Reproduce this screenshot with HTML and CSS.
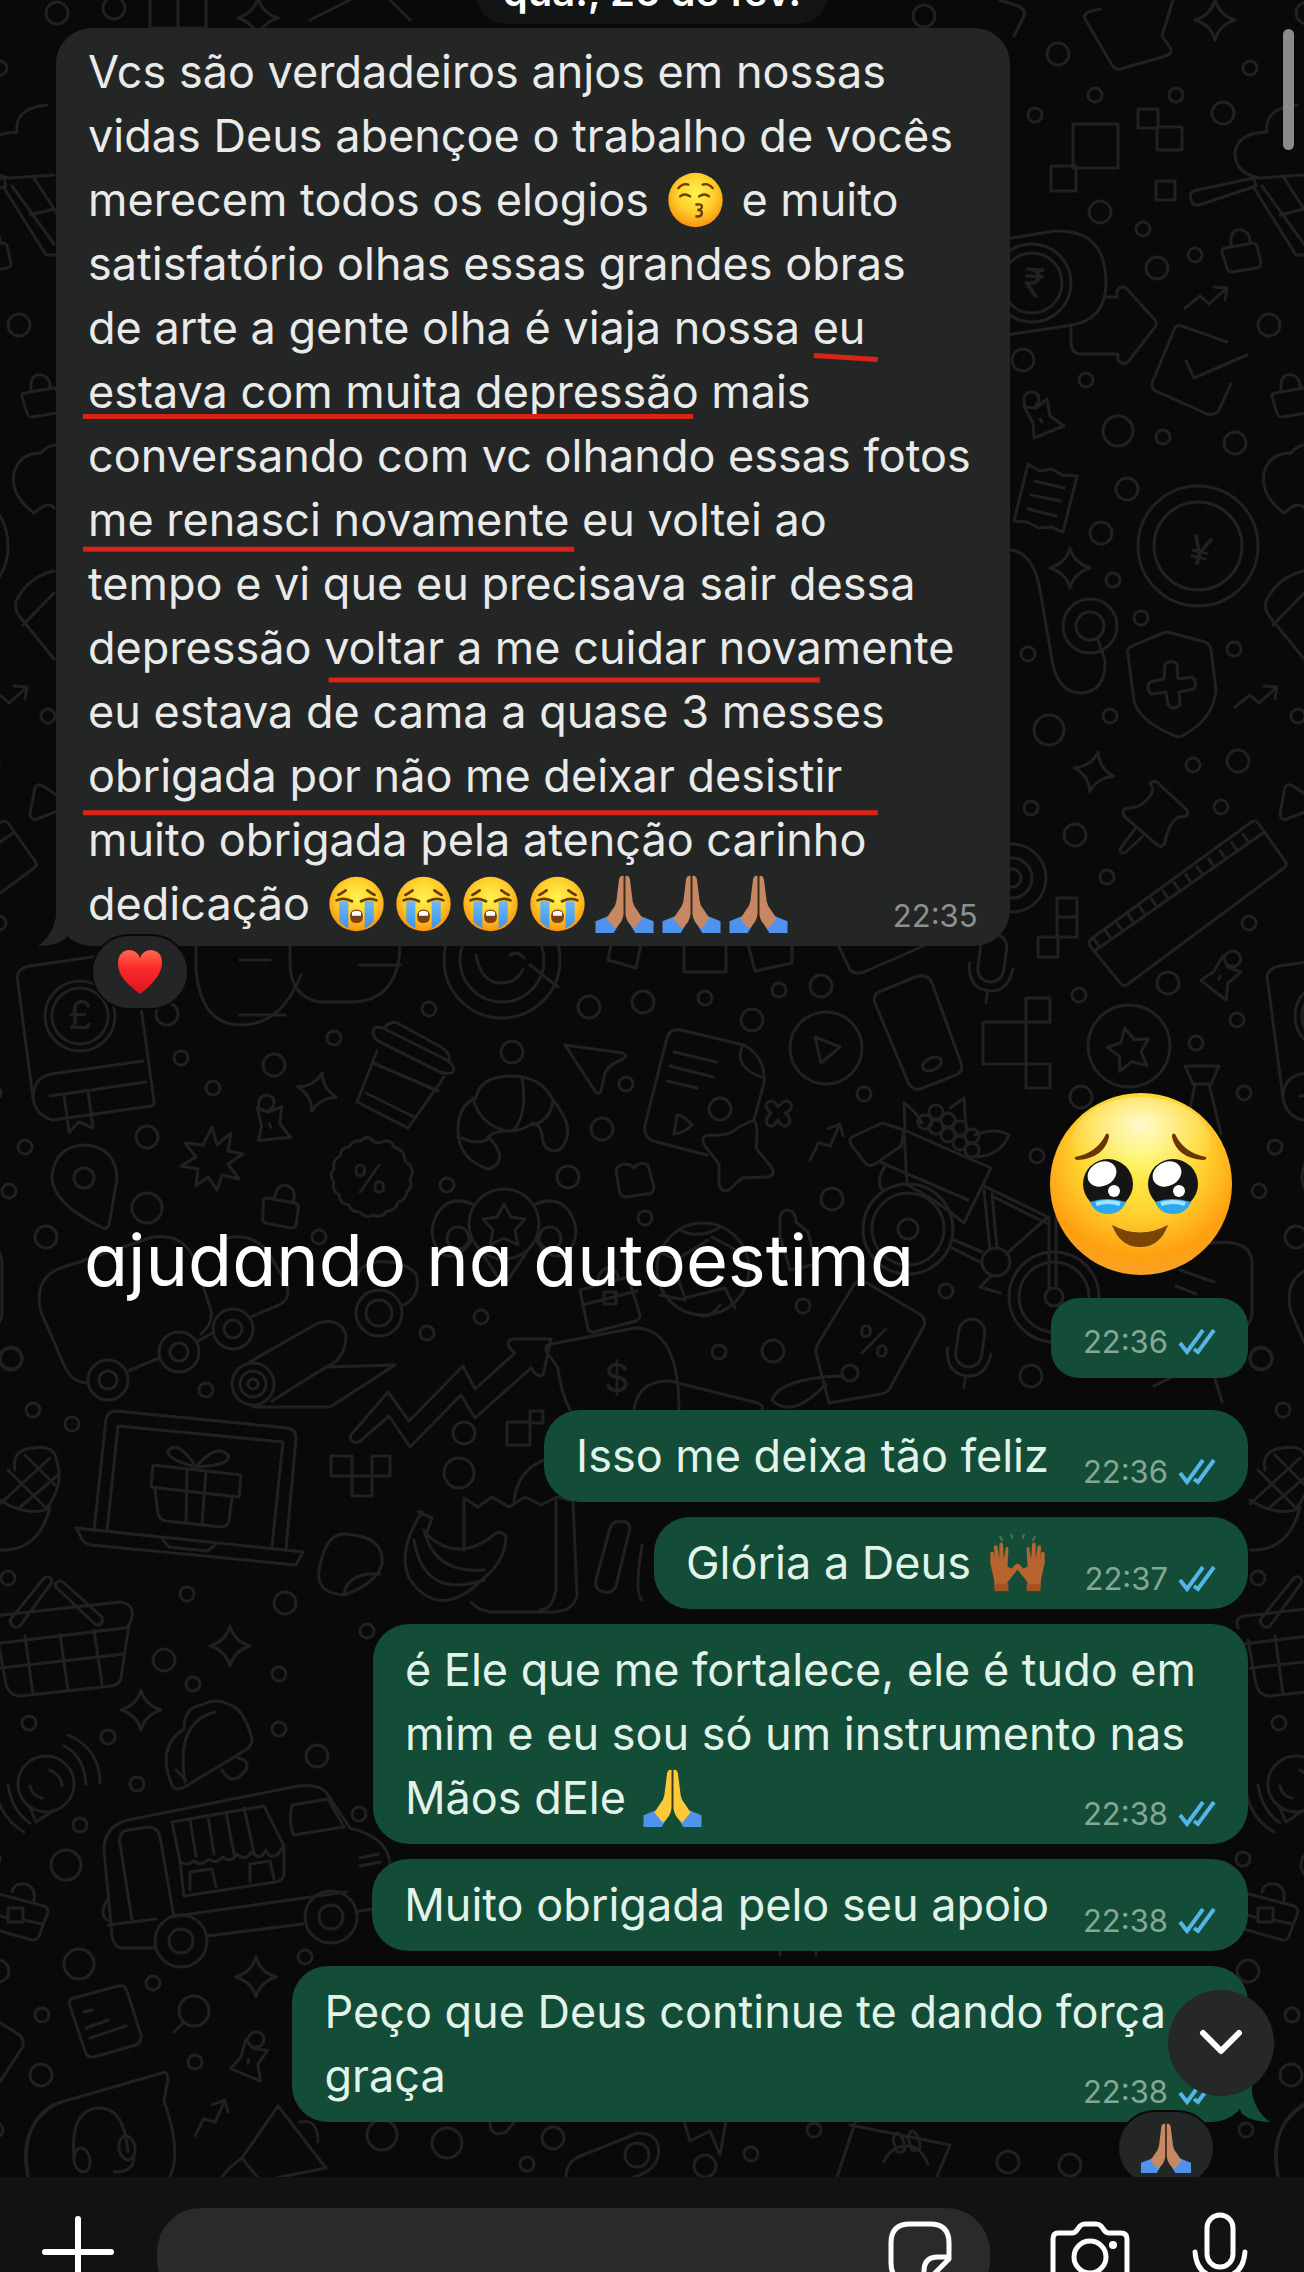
FILE: index.html
```html
<!DOCTYPE html>
<html lang="pt-BR">
<head>
  <meta charset="utf-8">
  <meta name="viewport" content="width=device-width, initial-scale=1">
  <title>Conversa</title>

  <link rel="stylesheet" href="styles.css">

</head>
<body>

  <!-- shared emoji and icons -->
  <svg class="sprite" aria-hidden="true">
    <defs>
      <radialGradient id="face" cx="50%" cy="38%" r="62%">
        <stop offset="0" stop-color="#fff24f"/>
        <stop offset="0.55" stop-color="#ffd02c"/>
        <stop offset="1" stop-color="#f79410"/>
      </radialGradient>
      <radialGradient id="face-big" cx="50%" cy="32%" r="68%">
        <stop offset="0" stop-color="#fff95c"/>
        <stop offset="0.5" stop-color="#ffd330"/>
        <stop offset="0.85" stop-color="#ff9f0f"/>
        <stop offset="1" stop-color="#f8a22a"/>
      </radialGradient>
      <radialGradient id="shine" cx="50%" cy="30%" r="60%">
        <stop offset="0" stop-color="#fffbe0" stop-opacity="0.9"/>
        <stop offset="1" stop-color="#fff7a0" stop-opacity="0"/>
      </radialGradient>
      <linearGradient id="heart-fill" x1="0" y1="0" x2="0" y2="1">
        <stop offset="0" stop-color="#ff6a4d"/>
        <stop offset="0.4" stop-color="#fb2c2c"/>
        <stop offset="1" stop-color="#e0121d"/>
      </linearGradient>
      <linearGradient id="tears" x1="0" y1="0" x2="0" y2="1">
        <stop offset="0" stop-color="#6cb8f5"/>
        <stop offset="1" stop-color="#3d94e8"/>
      </linearGradient>
    </defs>

    <symbol id="kiss" viewBox="0 0 64 64">
      <circle cx="32" cy="32" r="30" fill="url(#face)"/>
      <g fill="none" stroke="#6b3a05" stroke-width="2.6" stroke-linecap="round">
        <path d="M13 19q5-6 11-4M40 15q6-2 11 4"/>
        <path d="M15 28q5-4 11 0M36 28q6-4 11 0"/>
        <path d="M33 37q7-1 6 3-1 3-5 3 6 0 5 4-1 4-6 3"/>
      </g>
    </symbol>

    <symbol id="sob" viewBox="0 0 64 64">
      <circle cx="32" cy="32" r="30" fill="url(#face)"/>
      <path d="M13 29h10v30q-6-3-10-8zM41 29h10v22q-4 5-10 8z" fill="url(#tears)"/>
      <g fill="none" stroke="#6b3a05" stroke-width="3" stroke-linecap="round">
        <path d="M12 22q4-2 8-5M52 22q-4-2-8-5"/>
        <path d="M10 28q8-4 17 1M54 28q-8-4-17 1"/>
      </g>
      <path d="M32 38q7 0 7 8 0 7-7 7t-7-7q0-8 7-8z" fill="#7c3f10"/>
      <path d="M27 41q5-3 10 0v4H27z" fill="#fff"/>
    </symbol>

    <symbol id="hold-tears" viewBox="0 0 182 182">
      <circle cx="91" cy="91" r="91" fill="url(#face-big)"/>
      <ellipse cx="91" cy="50" rx="70" ry="46" fill="url(#shine)"/>
      <path d="M25 64q22-4 31-23 3-2 3 3-5 21-31 23-4 0-3-3zM156 64q-22-4-31-23-3-2-3 3 5 21 31 23 4 0 3-3z" fill="#6a3504"/>
      <circle cx="58" cy="91" r="25" fill="#151515"/>
      <circle cx="123" cy="91" r="25" fill="#151515"/>
      <g fill="#fff">
        <ellipse cx="52" cy="81" rx="15" ry="12" transform="rotate(-28 52 81)"/>
        <ellipse cx="117" cy="81" rx="15" ry="12" transform="rotate(-28 117 81)"/>
        <circle cx="64" cy="98" r="6"/>
        <circle cx="129" cy="98" r="6"/>
      </g>
      <path d="M40 109q17-6 36 0-5 12-18 12t-18-12zM105 109q17-6 36 0-5 12-18 12t-18-12z" fill="#2ba8ee"/>
      <path d="M46 111q12-4 24 0M111 111q12-4 24 0" fill="none" stroke="#a5e2ff" stroke-width="4"/>
      <path d="M62 132q28 15 56 0-8 22-28 22t-28-22z" fill="#7a4505"/>
    </symbol>

    <symbol id="pray" viewBox="0 0 64 64">
      <path d="M0 51l15-6 10 11-5 8H0zM64 51l-15-6-10 11 5 8h20z" fill="#4f93ee"/>
      <path d="M31 1q-4-1-5 4l-3 24q-1 6-5 10l-6 9 9 11q9-6 10-16z" fill="currentColor"/>
      <path d="M33 1q4-1 5 4l3 24q1 6 5 10l6 9-9 11q-9-6-10-16z" fill="currentColor"/>
      <path d="M32 3v42" stroke="#553019" stroke-opacity="0.6" stroke-width="1.6"/>
    </symbol>

    <symbol id="raise" viewBox="0 0 64 64">
      <path d="M15 7l-2-4M26 4l-1-4M38 4l1-4M49 7l2-4" stroke="#63897a" stroke-opacity="0.6" stroke-width="2.4" stroke-linecap="round"/>
      <g id="palm" fill="#b8642f">
        <path d="M6 50L2 32V21q2-3 4 0l1 8-1-15q2-3 4 0l2 14V11q2-3 4 0l1 17 2-13q3-2 3 1l-1 20 5 2q4-6 7-5 1 4-3 9l-9 11v10H7z"/>
        <path d="M7 55h15v8H7z" fill="#a65324"/>
      </g>
      <use href="#palm" transform="matrix(-1 0 0 1 64 0)"/>
    </symbol>

    <symbol id="heart" viewBox="0 0 46 46">
      <path d="M23 45C12 36 1 28 1 14 1 6 6 1 12 1q8 0 11 8Q26 1 34 1q11 1 11 13 0 14-22 31z" fill="url(#heart-fill)"/>
    </symbol>

    <symbol id="ticks" viewBox="0 0 38 26">
      <path d="M2 14l7 9L25 1M16 20l4 3L36 1" fill="none" stroke="#53b5e8" stroke-width="4"/>
    </symbol>
  </svg>

  <main class="chat">

    <!-- wallpaper, repeats every 1250 units sideways -->
    <svg class="wallpaper" viewBox="0 0 1304 2272" aria-hidden="true">
      <defs>
        <marker id="dot" markerUnits="userSpaceOnUse" markerWidth="20" markerHeight="20" refX="10" refY="10" orient="0">
          <circle cx="10" cy="10" r="7"/>
        </marker>
        <marker id="ring" markerUnits="userSpaceOnUse" markerWidth="28" markerHeight="28" refX="14" refY="14" orient="0">
          <circle cx="14" cy="14" r="11"/>
        </marker>
        <marker id="ring-lg" markerUnits="userSpaceOnUse" markerWidth="36" markerHeight="36" refX="18" refY="18" orient="0">
          <circle cx="18" cy="18" r="15"/>
        </marker>
        <path id="spark" d="M0-20Q4-5 20 0 4 5 0 20-4 5-20 0-4-5 0-20z"/>
        <path id="lock" d="M-15-5l28-5q3 0 4 3l4 17q0 4-4 5l-25 4q-4 0-5-4l-5-16q-1-3 3-4zM-9-7v-8q2-10 11-8 8 2 8 12"/>
        <path id="clip" d="M-16-10l12 1 11-9 3 17 14 10-30 12-1-15zM-15-11q-4-12 5-14 9-1 9 9l-4 6M0 2l2 3"/>
        <path id="zig" d="M-21 10L-6-2 3 6 21-10M8-11l13 1-2 12"/>
        <g id="mic">
          <rect x="-13" y="-26" width="26" height="48" rx="13"/>
          <path d="M-22 6q2 25 22 25T22 6M0 31v12"/>
        </g>
        <path id="star" d="M0-20l7 13 14 2-10 11 3 15-14-7-14 7 3-15-10-11 14-2z"/>

        <g id="doodles">
          <polyline class="dots" marker-start="url(#dot)" marker-mid="url(#dot)" marker-end="url(#dot)" points="1035,115 1095,95 1176,95 1250,68 1143,229 1195,255 1086,380 1163,437 1113,580 1141,618 1028,654 1234,649 1110,716 48,716 1193,765 1221,807 1031,808 1107,877 1249,923 1079,995 1237,1020 1196,1043 705,998 779,990 626,1084 864,1094 645,1218 803,1306 946,1291 719,1352 1037,1156 334,1038 181,1058 213,1088 25,1147 9,1191 447,1185 319,1237 427,1333 481,1317 206,1390 33,1410 72,1424 8,1578 187,1594 367,1631 429,1009 193,1684 279,1674 29,1723 108,1737 279,1729 137,1784 80,1825 359,1814 305,1957 153,1983 42,2015 195,2062 527,2164 1243,1859 1246,2130 814,2130 1244,1093 751,2154"/>
          <polyline class="dots" marker-start="url(#ring)" marker-mid="url(#ring)" marker-end="url(#ring)" points="57,13 114,8 924,16 1058,54 1223,113 1100,212 1157,268 1269,325 1023,360 1235,443 1127,489 1101,533 1238,761 1075,835 1168,983 589,1007 643,1002 752,1020 821,986 512,1052 602,1129 568,1177 720,1109 832,1199 773,1351 1031,1376 167,1014 274,1065 147,1137 46,1237 11,1358 464,1433 285,1603 164,1660 317,1756 41,2075 553,2138 1248,1971 1008,2162 705,2166 1070,2165 1081,1097 1261,1359"/>
          <polyline class="dots" marker-start="url(#ring-lg)" marker-mid="url(#ring-lg)" marker-end="url(#ring-lg)" points="1118,431 1049,730 147,1208 459,1473 66,1865 79,1964 382,2135 447,2143"/>

          <use href="#spark" x="1215" y="20"/>
          <use href="#spark" x="258" y="18"/>
          <use href="#spark" x="1070" y="568"/>
          <use href="#spark" transform="translate(1094 772) rotate(12)"/>
          <use href="#spark" transform="translate(317 1092) rotate(15)"/>
          <use href="#spark" x="230" y="1646"/>
          <use href="#spark" x="141" y="1710"/>
          <use href="#spark" x="256" y="1977"/>
          <use href="#lock" x="1240" y="253"/>
          <use href="#lock" x="1290" y="398"/>
          <use href="#lock" transform="translate(280 1208) rotate(20)"/>
          <use href="#clip" x="1040" y="417"/>
          <use href="#clip" transform="translate(1222 975) rotate(60)"/>
          <use href="#clip" transform="translate(270 1122) rotate(16)"/>
          <use href="#clip" transform="translate(250 2058) rotate(45)"/>
          <use href="#zig" x="1206" y="298"/>
          <use href="#zig" x="1256" y="697"/>
          <use href="#zig" transform="translate(825 1142) rotate(-25)"/>
          <use href="#zig" transform="translate(210 2118) rotate(-25)"/>
          <use href="#mic" transform="translate(992 960) rotate(8)"/>
          <use href="#mic" transform="translate(970 1345) rotate(8)"/>
          <use href="#star" transform="translate(1129 1048) rotate(-12)"/>
          <use href="#star" x="504" y="1224"/>

          <!-- top corner -->
          <path d="M150 0v28h56V0M178 0v28M1100 9l-12 3q-5 3-3 7l27 46q3 5 8 4l46-13q8-4 3-10l-7-10 11-36M1000 0l18 6q8 3 6 10l-10 20M310 20l40-20M390 0l20 20"/>
          <path d="M1073 124h45v44h-45zM1051 166h25v25h-25zM1138 109h20v19h-20zM1157 127h25v23h-25zM1156 181h19v19h-19z"/>
          <path d="M1304 175l-45 3q-24-5-24-25 2-20 32-21-3-24 30-27M1191 200q-3-8 6-10l57-12 2 8-57 19q-6 1-8-5zM1254 188l42 67h40M1262 186l42 58M1284 178l22 34M1280 215l24-6"/>
          <circle cx="1032" cy="283" r="39"/>
          <circle cx="1032" cy="283" r="30"/>
          <path d="M1000 240l55-9q51-2 51 52 0 39-40 43l-66 10M1106 297h11v-6q4-7 10-2l28 31q3 4 0 7l-27 35q-6 4-10-2v-6h-38q-9-1-9-12v-15"/>
          <path d="M1227 342l-45-16q-6-2-8 4l-22 53q-1 6 4 8l51 23q8 2 12-4l12-26M1186 361l8 17 53-23"/>
          <path d="M1028 464l12 7 12-2 10 6 15 1-14 56-12-5-12 1-12-6-13-1zM1035 481l29 7M1031 495l29 6M1028 509l28 7"/>
          <circle cx="1198" cy="546" r="60"/>
          <circle cx="1198" cy="546" r="44"/>
          <path d="M1304 508q-5-8-20 5-24-18-20-40 5-20 27-20 8-10 22-8"/>
          <path d="M1000 550q32-5 40 40l12 70q5 33 30 33 24-2 23-33l-7-20"/>
          <circle cx="1090" cy="626" r="27"/>
          <circle cx="1090" cy="626" r="14"/>
          <path d="M1304 571q-25 5-38 30-2 9 4 16l34 42M1273 625l31-32"/>
          <path d="M1128 655q-2-6 4-9l31-13q4-2 8 0l34 9q5 2 6 8l5 40q-2 28-32 45-4 3-9 1-36-15-41-35z"/>
          <path d="M1165 664q7-5 12 0l1 15 14-2q6 5 2 12l-15 3 1 13q-7 6-12 0l-2-13-15 2q-6-6-1-12l14-3z"/>
          <path d="M1150 783q6-4 10 2l26 24q6 8-7 8-10 5-14 25-3 8-9 2l-32-28q-3-8 4-8 14 0 22-12 5-6 0-13zM1135 829l-15 20q0 6 6 3l17-16"/>
          <path d="M1250 823q5-4 8 0l27 38q3 4-1 7l-156 116q-4 3-7 0l-31-38q-2-4 1-7zM1096 950l167-117"/>
          <path class="ruler" d="M1095 943l158-111"/>
          <path d="M1285 787q3-4 8-1l24 16q2 4-2 6l-28 11q-6 2-7-5z"/>
          <circle cx="1012" cy="878" r="34"/>
          <circle cx="1012" cy="878" r="20"/>
          <circle cx="1012" cy="878" r="9"/>
          <path d="M1057 898h20v19h-20zM1057 917h20v20h-20zM1038 937h20v20h-20zM1026 998h24v24h-24zM983 1022h43v42h-43zM1026 1064h24v24h-24z"/>
          <circle cx="1129" cy="1046" r="41"/>
          <path d="M1185 1066h34l-8 18h-18zM1195 1084l-8 40M1209 1084l12 50"/>

          <!-- middle band -->
          <circle cx="502" cy="960" r="58"/>
          <circle cx="502" cy="960" r="42"/>
          <path d="M476 955q5 28 25 28 16 0 22-14M510 955q8-5 14 3M530 965l28 22M612 940l-4 20 28 8 6-28M684 940v32h42v-32M747 940l8 31 37-8v-23M836 940l14 30q6 5 14 2l64-28M196 940v30q5 55 45 55t60-50M240 960h30M240 1015h45M290 940v22q0 35 30 40h30q50 0 50-60M360 965h40"/>
          <path d="M875 1003q-3-9 6-12l37-15q10-2 14 7l29 80q3 8-5 12l-36 14q-8 2-12-7z"/>
          <ellipse cx="932" cy="1064" rx="10" ry="6" transform="rotate(-25 932 1064)"/>
          <circle cx="826" cy="1048" r="36"/>
          <path d="M815 1037l25 10-19 16z"/>
          <path d="M565 1045l58 8q5 3 0 6-18 7-19 18l-3 14q-2 5-6 0z"/>
          <path d="M707 1155l-54-14q-10-4-8-16l22-87q3-10 14-8l63 15q22 12 20 38l-10 37M742 1047q-8 20 19 30M674 1052l42 10M670 1066l43 11M667 1081l30 7M677 1115q8 1 15 10-8 8-18 9z"/>
          <path d="M753 1120q6 3 3 28l16 20q4 8-6 9l-24 1-13 12q-8 3-10-6v-20l-14-18q-6-10 4-11 20 2 28-7z"/>
          <path d="M778 1107q8-10 13-3 2 7-6 9 8 6 3 12-6 3-10-5-6 10-11 4-2-6 4-11-8-6-3-11 6-3 10 5z"/>
          <path d="M616 1170q3-8 14-5l4 3q6-7 14-3l6 22q-1 8-8 7l-20 3q-6 0-7-8zM373 1033q0-8 10-5l60 30q14 8 10 14-4 3-13 0l-60-30q-6-3-7-9zM385 1027q8-8 16-2l40 22q10 6 8 14M377 1051l-20 51 51 26 36-51M366 1093l48 24M373 1063l65 28"/>
          <path d="M458 1130q0-25 18-32 4-22 35-22 30 0 42 24 20 25 13 40-5 14-16 10-8-4-8-15-2-12-10-12-8 8-24 8-15 0-20 6 10 8 12 20-2 10-12 12-30-10-30-39zM473 1098q6 25 30 32M522 1078q6 35-8 52M553 1100q-2 20-20 25M462 1138q15 8 28 0"/>
          <path d="M904 1130l87 38-27 55q-30-25-57-38zM904 1130l-22-7-30 14q-4 4 0 9l14 18q4 3 9 0l26-18 3-16M880 1162l88 38M886 1164q-12 20-2 27M905 1128l-1-25q12 8 18 20M950 1108l14-10 2 30M975 1135q20-8 34 0-8 20-32 22"/>
          <g>
            <circle cx="925" cy="1122" r="7"/><circle cx="936" cy="1112" r="7"/><circle cx="948" cy="1120" r="7"/>
            <circle cx="936" cy="1127" r="7"/><circle cx="948" cy="1135" r="7"/><circle cx="960" cy="1128" r="7"/>
            <circle cx="960" cy="1143" r="7"/><circle cx="972" cy="1136" r="7"/><circle cx="972" cy="1150" r="7"/>
          </g>
          <circle cx="908" cy="1229" r="45"/>
          <circle cx="908" cy="1229" r="36"/>
          <circle cx="908" cy="1229" r="10"/>
          <circle cx="1054" cy="1297" r="45"/>
          <circle cx="1054" cy="1297" r="35"/>
          <circle cx="1054" cy="1297" r="9"/>
          <circle cx="996" cy="1262" r="14"/>
          <path d="M984 1186l64 31-42 37M992 1196l54 27M984 1190l6 60M992 1194l5 54M954 1240l28 12M952 1248l28 14M1049 1217v70M1056 1215v70M992 1275l-12 12 20 6"/>
          <circle cx="703" cy="1269" r="46"/>
          <path d="M680 1230q20 10 40-3M712 1237l28 15M708 1240l-32 20-16-8M685 1298l40-10 10 20M685 1298l-10-28M685 1300l-25-5M720 1305q-10 14-20 10"/>
          <path d="M780 1220q0-10 8-10 8 2 8 12l12 10 8 32-26 6-10-34z"/>
          <path d="M855 1283q6-3 12 0l54 32q5 4 3 11l-34 62q-3 5-9 6l-52 9-13-50q-1-5 3-11z"/>
          <circle cx="850" cy="1373" r="8"/>
          <path d="M842 1376q-62 2-70 24 20 20 54-16"/>
          <circle cx="504" cy="1224" r="35"/>
          <path d="M472 1240q-14 22-30 14-16-16-6-38 12-22 36-12M536 1240q14 22 30 14 16-16 6-38-12-22-36-12"/>
          <circle cx="458" cy="1238" r="11"/>
          <circle cx="550" cy="1238" r="11"/>
          <path d="M477 1246l27 40 27-40M580 1290l48-13 12 38q0 4-4 6l-42 11q-4 1-6-3zM582 1305l55-14M604 1292h12v12h-12zM598 1282q0-12 10-14 10 2 10 10"/>
          <path d="M570 1410q-10-20-12-42l-11-16q-4-6 4-8l84-16q44 0 44 82M634 1410q4-30 36-29l88 22q8 4 2 9"/>

          <!-- left side -->
          <path d="M17 976q2-8 12-10l98-14M17 976l16 122q3 18 20 22l98-14q4-1 3-5L140 1000M33 1098q0-20 18-24l92-13M50 1096l96-14M64 1094l5 38 10-10 14 6-5-37"/>
          <circle cx="80" cy="1016" r="35"/>
          <circle cx="80" cy="1016" r="28"/>
          <path d="M212 1127l5 18 14-12-3 18 15 3-15 10 11 15-17-4-5 15-9-13-12 9 2-17-17-3 15-9-11-14 18 2z"/>
          <path d="M370 1138q6 8 14 3 8-1 10 6 8 2 10 8 0 8 6 10 5 8 0 14 3 8-3 13-2 9-9 10-2 9-11 9-6 8-14 4-8 4-13-3-9 0-11-7-9-1-10-10-8-5-5-13-6-7 0-13-2-9 6-13 1-9 9-9 4-7 12-6 4-5 9-3z"/>
          <circle cx="84" cy="1178" r="10"/>
          <path d="M103 1228q-52-25-51-52 3-30 33-31 31 2 32 34l-8 46q-2 4-6 3z"/>
          <circle cx="108" cy="1380" r="20"/><circle cx="108" cy="1380" r="9"/>
          <circle cx="179" cy="1352" r="20"/><circle cx="179" cy="1352" r="9"/>
          <circle cx="233" cy="1329" r="20"/><circle cx="233" cy="1329" r="9"/>
          <circle cx="379" cy="1313" r="23"/><circle cx="379" cy="1313" r="13"/>
          <path d="M88 1383q-16 0-24-18l-23-53q-8-34 20-44l92-31q32-4 42 25l16 48q2 14-10 24M128 1371l31-13M198 1341l16-9M251 1317l28-12q12-6 8-20l-20-35q-20-20-45-10M402 1306q20-10 14-32-12-14-40-12-20 2-20 24"/>
          <circle cx="253" cy="1384" r="21"/><circle cx="253" cy="1384" r="13"/><circle cx="253" cy="1384" r="5"/>
          <path d="M248 1363l70-40q22-6 28 12 0 24-20 32l-54 34M326 1367l69-2-65 42h-77"/>
          <path d="M350 1436l38-44 21 29 54-55 12 23 40-36-6-6q-3-7 4-8h38l-8 36q-6 3-12-7l-56 50-14-23-51 52-21-31-30 26q-8 2-9-6z"/>
          <path d="M94 1531l12-112q2-8 10-8l172 17q8 2 8 10l-10 111M107 1531l11-105 165 16-11 104M76 1528l227 24-7 13-205-20q-9-2-10-8zM163 1540l6 7 38 4 8-6"/>
          <path d="M153 1465l88 10-2 22-88-10zM155 1489l3 25q2 6 8 7l56 6q6-1 7-7l3-22M187 1469l-1 54M206 1471l-4 54M196 1467q-30-8-28-16 10-12 28 16 20-24 32-12 4 10-32 12z"/>
          <path d="M331 1456h21v20h-21zM352 1476h20v20h-20zM372 1456h18v20h-18zM507 1422h23v23h-23zM530 1411h13v12h-13z"/>
          <path d="M345 1534q40 2 37 30-6 20-38 31-28-2-25-24 6-38 26-37zM344 1594q4-22 36-20"/>
          <path d="M418 1512l14 6-6 16q30 28 64 4 10-10 16-2 0 24-22 42-45 45-75 0-12-28 13-66zM424 1530q10 44 60 40M414 1540q10 60 70 40"/>
          <path d="M464 1550v-52l14 9 14-10 17 10 16-10 16 8 16-8 16 4 4 95q-4 16-26 16h-60q-14-2-20-10M556 1500v90q-4 20-16 20M514 1500q4-30 30-40"/>
          <path d="M620 1522q8-2 10 6l-14 58q-4 8-12 6-10-2-8-12l14-52q4-8 10-6zM642 1545q-8 50 0 55"/>
          <path d="M15 1470q-4-20 18-22 22-4 24 14 8 24-12 48M0 1500q28 18 50 8-12 44-50 42M8 1470l40 40M25 1455l30 30M50 1458l-50 46M58 1475l-40 34"/>
          <path d="M-12 1628q-4-10 6-12l126-14q14 2 12 14-2 12-8 12l-130 16M-2 1640l8 44q3 12 14 12l92-10q8-2 9-8l8-54M0 1668l124-14M25 1636l8 58M60 1634l8 56M94 1630l8 54M10 1620l34-42q6-4 8 4l-32 44q-8 4-10-6zM56 1583q4-4 8 0l38 34q2 8-6 8l-38-36q-4-3-2-6z"/>
          <circle cx="46" cy="1784" r="28"/>
          <path d="M30 1808l6 14 18-12M30 1786q2 10 12 12M50 1770q12 6 12 16M64 1746q20 10 22 38M68 1735q32 14 32 48M8 1785q4 26 22 38M-4 1790q4 28 28 42"/>
          <path d="M172 1785q-16-38 12-56 0-22 18-24 14-8 28 0 14 4 22 34 0 8-8 12l-56 34q-14 8-16 0zM185 1782q-10-60 30-70M176 1770l10 10M222 1770q10 18 24 0 4-10-8-12"/>
          <path d="M120 1948q-6-2-8-12l-8-86q0-24 24-30l170-34q20-2 28 6l24 36q40 10 40 38M107 1920q-8-6 0-20M120 1948h36M207 1936l96-12M356 1912l30-6M108 1925l48-6M176 1916l170-24M132 1920l-12-76q-2-12 8-14l20-3q10 0 12 10l14 80M172 1822l92-16 20 40-6 8q-8 6-12-4-6 12-14 2-8 10-15 2-6 10-14 3-8 8-14 2-8 8-15 2-8 6-14 0zM180 1862l4 34 92-14q8-2 8-8v-28M292 1805l36-6 16 28-50 8q-6-12-2-30zM190 1820l6 36M208 1816l6 38M226 1812l8 42M244 1808l10 44M190 1890v-18l22-3 4 18M250 1882v-18l20-3 4 18M360 1858l18-4M360 1866l20-4"/>
          <circle cx="181" cy="1941" r="26"/><circle cx="181" cy="1941" r="12"/>
          <circle cx="331" cy="1917" r="26"/><circle cx="331" cy="1917" r="12"/>
          <path d="M-16 1890l60 16q4 2 4 6l-9 24q-2 5-7 4l-56-16M-14 1912l22 6M24 1920l18 4M8 1908h15v14H8zM12 1892q2-10 14-8 10 4 8 16"/>
          <path d="M70 2006q-3-6 4-8l44-12q7-2 9 5l14 44q1 7-5 10l-42 12q-7 1-9-6zM84 2012l8-2M86 2028l22-8M90 2038l36-12"/>
          <circle cx="194" cy="2011" r="15"/>
          <path d="M184 2022l-10 10M-4 2020l22 14q8 6 4 14l-26 40"/>
          <path d="M28 2177q-12-50 30-74l104-30q6-2 6 6l-4 22q18 50 6 76M74 2158q-4-48 24-50 26-2 30 44"/>
          <ellipse cx="82" cy="2160" rx="8" ry="12" transform="rotate(-10 82 2160)"/>
          <ellipse cx="127" cy="2148" rx="8" ry="12" transform="rotate(-10 127 2148)"/>
          <path d="M134 2160q-2 12-20 12M278 2106l-36 52q-20 14-20 22M278 2106l48 62-50 10M242 2158l16 20M300 2122q18-4 18 20M566 2177q0-14 12-20l60-24q24 0 20 24-4 14-24 20M684 2121l6 20 20-10 10 24 6-34M850 2125l100 20-14 34M856 2120l-20 60M490 2122q0 16 16 10l10-12"/>
          <circle cx="637" cy="2155" r="12"/>
          <path d="M884 2162q6-16 24-16 12 0 20 18M893 2140q4-14 10 0t-6 12zM908 2138q4-14 10 0t-6 12z"/>
          <path d="M1304 2104q-34 20-26 70M1154 1386l40-20q10-2 14 10M1210 1362l12 40M1204 1244q48-8 48 20v50q-2 12-8 12M1180 1270l34 12M1176 1286l20 8M780 1955v-8M816 1955v-8"/>
          <g class="signs">
            <text x="1022" y="296" transform="rotate(5 1022 296)">₹</text>
            <text x="1186" y="562" transform="rotate(14 1186 562)">¥</text>
            <text x="68" y="1029">£</text>
            <text x="350" y="1193">%</text>
            <text x="852" y="1352" transform="rotate(10 852 1352)">%</text>
            <text x="604" y="1392">$</text>
          </g>
        </g>
      </defs>
      <use href="#doodles"/>
      <use href="#doodles" x="1250"/>
      <use href="#doodles" x="-1250"/>
    </svg>

    <div class="date">qua., 26 de fev.</div>

    <article class="bubble received tail-left">
      <p>
        Vcs são verdadeiros anjos em nossas<br>
        vidas Deus abençoe o trabalho de vocês<br>
        merecem todos os elogios <svg class="emoji" role="img" aria-label="beijo"><use href="#kiss"/></svg> e muito<br>
        satisfatório olhas essas grandes obras<br>
        de arte a gente olha é viaja nossa eu<br>
        estava com muita depressão mais<br>
        conversando com vc olhando essas fotos<br>
        me renasci novamente eu voltei ao<br>
        tempo e vi que eu precisava sair dessa<br>
        depressão voltar a me cuidar novamente<br>
        eu estava de cama a quase 3 messes<br>
        obrigada por não me deixar desistir<br>
        muito obrigada pela atenção carinho<br>
        dedicação <svg class="emoji" role="img" aria-label="choro"><use href="#sob"/></svg><svg class="emoji" role="img" aria-label="choro"><use href="#sob"/></svg><svg class="emoji" role="img" aria-label="choro"><use href="#sob"/></svg><svg class="emoji" role="img" aria-label="choro"><use href="#sob"/></svg><svg class="emoji skin" role="img" aria-label="mãos juntas"><use href="#pray"/></svg><svg class="emoji skin" role="img" aria-label="mãos juntas"><use href="#pray"/></svg><svg class="emoji skin" role="img" aria-label="mãos juntas"><use href="#pray"/></svg>
      </p>
      <span class="meta"><time>22:35</time></span>
      <!-- red pen marks over the text -->
      <svg class="marks" viewBox="0 0 955 918" aria-hidden="true">
        <path d="M759 328l64 4M27 389h611M27 522h492M273 653h492M27 786h796"/>
      </svg>
      <svg class="tail" viewBox="0 0 40 76" aria-hidden="true"><path d="M18 0v45Q16 64 0 76q18 0 28-8l12-30z"/></svg>
      <span class="reaction"><svg class="heart" role="img" aria-label="coração"><use href="#heart"/></svg></span>
    </article>

    <section class="highlight">
      <h1>ajudando na autoestima</h1>
      <div class="big-emoji">
        <svg role="img" aria-label="segurando as lágrimas"><use href="#hold-tears"/></svg>
        <div class="bubble sent time-only">
          <span class="meta"><time>22:36</time><svg class="ticks"><use href="#ticks"/></svg></span>
        </div>
      </div>
    </section>

    <article class="bubble sent">
      <p>Isso me deixa tão feliz</p>
      <span class="meta"><time>22:36</time><svg class="ticks"><use href="#ticks"/></svg></span>
    </article>

    <article class="bubble sent">
      <p>Glória a Deus <svg class="emoji" role="img" aria-label="mãos para cima"><use href="#raise"/></svg></p>
      <span class="meta"><time>22:37</time><svg class="ticks"><use href="#ticks"/></svg></span>
    </article>

    <article class="bubble sent long">
      <p>
        é Ele que me fortalece, ele é tudo em<br>
        mim e eu sou só um instrumento nas<br>
        Mãos dEle <svg class="emoji yellow" role="img" aria-label="mãos juntas"><use href="#pray"/></svg>
      </p>
      <span class="meta"><time>22:38</time><svg class="ticks"><use href="#ticks"/></svg></span>
    </article>

    <article class="bubble sent">
      <p>Muito obrigada pelo seu apoio</p>
      <span class="meta"><time>22:38</time><svg class="ticks"><use href="#ticks"/></svg></span>
    </article>

    <article class="bubble sent long tail-right">
      <p>
        Peço que Deus continue te dando força<br>
        graça
      </p>
      <span class="meta"><time>22:38</time><svg class="ticks"><use href="#ticks"/></svg></span>
      <svg class="tail" viewBox="0 0 40 76" aria-hidden="true"><path d="M22 0v45q2 19 18 31-18 0-28-8L0 38z"/></svg>
      <span class="reaction"><svg class="skin" role="img" aria-label="mãos juntas"><use href="#pray"/></svg></span>
    </article>

    <div class="scrollbar"></div>
    <button class="to-bottom" type="button" aria-label="Ir para o fim">
      <svg viewBox="0 0 44 28"><path d="M4 4l18 18L40 4"/></svg>
    </button>
  </main>

  <form class="composer">
    <button type="button" aria-label="Anexar">
      <svg viewBox="0 0 72 72"><path d="M36 3v66M3 36h66"/></svg>
    </button>
    <div class="field">
      <input type="text" aria-label="Mensagem">
      <button type="button" aria-label="Figurinhas">
        <svg viewBox="0 0 64 64"><path d="M22 3h20q19 0 19 19v16L38 61H22Q3 61 3 42V22Q3 3 22 3zM36 61V50q0-14 14-14h11"/></svg>
      </button>
    </div>
    <button class="camera" type="button" aria-label="Câmera">
      <svg viewBox="0 0 80 68"><path d="M8 12h14q3 0 5-3l3-4q2-2 5-2h11q3 0 5 2l3 4q2 3 5 3h12q6 0 6 6v41q0 6-6 6H9q-6 0-6-6V18q0-6 5-6z"/><circle cx="40" cy="36" r="16"/><circle class="dot" cx="63" cy="24" r="4"/></svg>
    </button>
    <button class="voice" type="button" aria-label="Gravar áudio">
      <svg viewBox="0 0 56 84"><rect x="15" y="3" width="26" height="52" rx="13"/><path d="M3 40q2 25 25 25t25-25M28 65v14"/></svg>
    </button>
  </form>

</body>
</html>
```

FILE: styles.css
```css
* {
  margin: 0;
  padding: 0;
  box-sizing: border-box;
}

body {
  background-color: #090909;
  color: #f0f1f0;
  font-family: Inter, "Liberation Sans", sans-serif;
  font-size: 45px;
  line-height: 64px;
  height: 100vh;
  overflow: hidden;
  display: flex;
  flex-direction: column;
}

button {
  background: none;
  border: 0;
  color: inherit;
  display: block;
  flex: none;
}

.sprite {
  position: absolute;
  width: 0;
  height: 0;
}

/* messages */
.chat {
  position: relative;
  flex: none;
  display: flex;
  flex-direction: column;
  align-items: flex-end;
  gap: 15px;
  padding: 0 56px 55px;
  overflow: hidden;
}
.wallpaper {
  position: absolute;
  top: 0;
  left: 0;
  width: 100%;
  fill: none;
  stroke: #212121;
  stroke-width: 3;
  stroke-linejoin: round;
  stroke-linecap: round;
}
.wallpaper .dots {
  stroke: none;
}
.wallpaper marker {
  stroke: #212121;
  stroke-width: 3;
}
.wallpaper .ruler {
  stroke-width: 10;
  stroke-linecap: butt;
  stroke-dasharray: 3 11;
}
.wallpaper .signs {
  fill: #212121;
  stroke: none;
  font-size: 40px;
}

.date {
  position: relative;
  align-self: center;
  margin-top: -40px;
  margin-bottom: -11px;
  padding: 0 26px;
  border-radius: 28px;
  background-color: #131414;
  color: #fff;
  font-size: 40px;
  font-weight: 600;
}

.bubble {
  position: relative;
  display: flex;
  align-items: flex-end;
  gap: 34px;
  padding: 14px 32px;
  border-radius: 36px;
  white-space: nowrap;
}
.bubble.received {
  align-self: flex-start;
  width: 80%;
  padding: 12px 32px 10px;
  background-color: #242625;
  color: #e9eaea;
}
.bubble.sent {
  background-color: #144d37;
  color: #e2f3ea;
}
.bubble.long {
  padding-right: 52px;
}
.bubble.tail-right {
  padding-right: 82px;
}

.meta {
  display: flex;
  align-items: center;
  gap: 10px;
  height: 32px;
  color: #85a798;
  font-size: 31px;
  line-height: 32px;
}
.received .meta,
.long .meta {
  position: absolute;
  right: 32px;
  bottom: 14px;
}
.received .meta {
  color: #8e9190;
}
.ticks {
  width: 38px;
  height: 26px;
}

.emoji {
  width: 59px;
  height: 58px;
  margin: 0 4px;
  vertical-align: -13px;
}
.skin {
  color: #c68863;
}
.yellow {
  color: #ffc93a;
}

.marks {
  position: absolute;
  top: 0;
  left: 0;
  width: 100%;
  fill: none;
  stroke: #d92316;
  stroke-width: 5;
}

.tail {
  position: absolute;
  bottom: 0;
  width: 40px;
  height: 76px;
}
.tail-left .tail {
  left: -18px;
  fill: #242625;
}
.tail-right .tail {
  right: -22px;
  fill: #144d37;
}

.reaction {
  position: absolute;
  bottom: -64px;
  display: flex;
  align-items: center;
  justify-content: center;
  width: 98px;
  height: 76px;
  border: 2px solid #090909;
  border-radius: 38px;
  background-color: #242625;
}
.tail-left .reaction {
  left: 35px;
}
.tail-right .reaction {
  right: 33px;
}
.reaction svg {
  width: 50px;
  height: 50px;
}
.reaction .heart {
  width: 46px;
  height: 46px;
}

/* caption and big emoji */
.highlight {
  position: relative;
  align-self: stretch;
  display: flex;
  justify-content: space-between;
  align-items: flex-end;
  margin-top: 132px;
  margin-bottom: 17px;
  padding-left: 28px;
}
.highlight h1 {
  padding-bottom: 78px;
  color: #fff;
  font-size: 72px;
  font-weight: 400;
  line-height: 80px;
  font-feature-settings: "cv11";
}
.big-emoji {
  display: flex;
  flex-direction: column;
  align-items: flex-end;
  gap: 23px;
}
.big-emoji > svg {
  width: 182px;
  height: 182px;
  margin-right: 16px;
}
.time-only {
  height: 80px;
  align-items: center;
  padding-top: 22px;
  border-radius: 28px;
}

.scrollbar {
  position: absolute;
  top: 29px;
  right: 10px;
  width: 11px;
  height: 121px;
  border-radius: 6px;
  background-color: #8b8b8b;
}
.to-bottom {
  position: absolute;
  right: 30px;
  bottom: 81px;
  width: 106px;
  height: 106px;
  border-radius: 50%;
  background-color: #262727;
}
.to-bottom svg {
  display: block;
  width: 44px;
  margin: 0 auto;
  fill: none;
  stroke: #fff;
  stroke-width: 6;
  stroke-linecap: round;
  stroke-linejoin: round;
}

/* bottom bar */
.composer {
  position: relative;
  flex: none;
  display: flex;
  align-items: flex-start;
  padding: 31px 56px 60px 42px;
  background-color: #111212;
}
.composer svg {
  display: block;
  width: 72px;
  fill: none;
  stroke: #fff;
  stroke-width: 6;
  stroke-linecap: round;
  stroke-linejoin: round;
}
.composer > button {
  padding-top: 8px;
}
.composer .field {
  flex: 1;
  min-width: 0;
  display: flex;
  align-items: flex-start;
  height: 96px;
  margin: 0 60px 0 43px;
  padding: 13px 38px 0 40px;
  border-radius: 44px;
  background-color: #2a2a2a;
}
.field input {
  flex: 1;
  min-width: 0;
  height: 70px;
  border: 0;
  outline: 0;
  background: none;
  color: #fff;
  font: inherit;
}
.composer .field svg {
  width: 64px;
  stroke-width: 5;
}
.composer .camera {
  padding-top: 13px;
}
.composer .camera svg {
  width: 80px;
  stroke-width: 5;
}
.composer .voice {
  margin-left: 62px;
  padding-top: 4px;
}
.composer .voice svg {
  width: 56px;
  stroke-width: 5;
}
.composer .dot {
  fill: #fff;
  stroke: none;
}
```
